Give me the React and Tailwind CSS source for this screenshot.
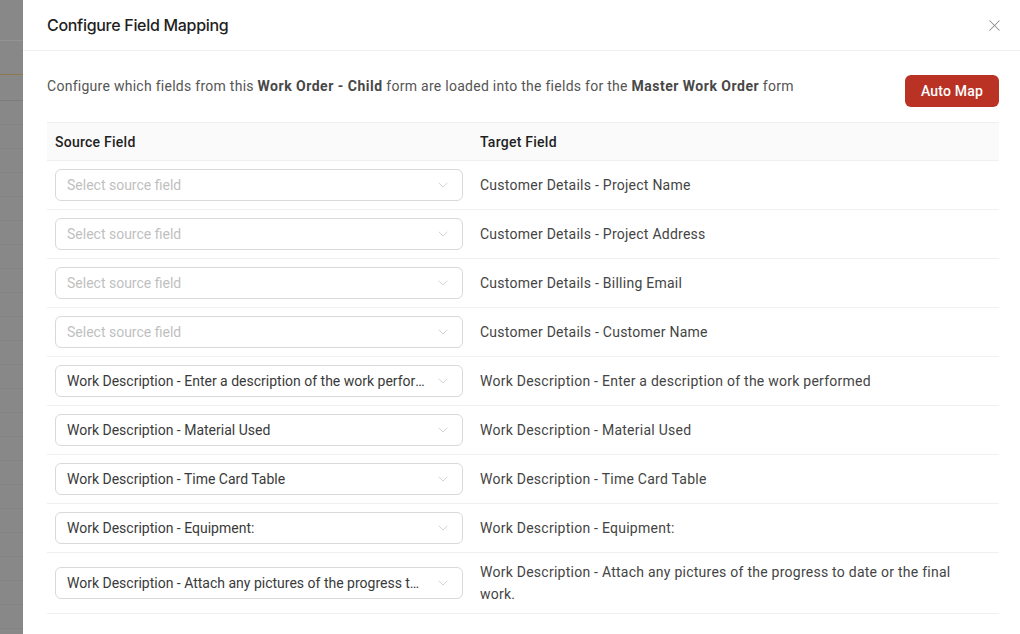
import { X, ChevronDown } from "lucide-react";

const rows = [
  { source: "", target: "Customer Details - Project Name" },
  { source: "", target: "Customer Details - Project Address" },
  { source: "", target: "Customer Details - Billing Email" },
  { source: "", target: "Customer Details - Customer Name" },
  {
    source: "Work Description - Enter a description of the work performed",
    target: "Work Description - Enter a description of the work performed",
  },
  { source: "Work Description - Material Used", target: "Work Description - Material Used" },
  { source: "Work Description - Time Card Table", target: "Work Description - Time Card Table" },
  { source: "Work Description - Equipment:", target: "Work Description - Equipment:" },
  {
    source: "Work Description - Attach any pictures of the progress to date or the final work.",
    target: "Work Description - Attach any pictures of the progress to date or the final work.",
  },
];

const SourceSelect = ({ value }) => (
  <div className="flex h-8 w-[408px] items-center rounded-md border border-[#d9d9d9] bg-white pl-[11px] pr-[11px]">
    <span
      className={`min-w-0 flex-1 truncate text-sm ${value ? "text-[#3a3a3a]" : "text-[#bfbfbf]"}`}
    >
      {value || "Select source field"}
    </span>
    <ChevronDown size={16} strokeWidth={1.1} className="ml-2 shrink-0 text-[#c4c4c4]" />
  </div>
);

const BackdropStrip = () => (
  <div className="flex w-[23px] shrink-0 flex-col bg-[#888888]">
    <div className="h-[41px] border-b border-[#939393]" />
    <div className="h-[34px] border-b border-[#8f7a4e]" />
    <div className="h-[26px] border-b border-[#7d7d7d]" />
    {Array.from({ length: 22 }).map((_, i) => (
      <div key={i} className="h-[24px] shrink-0 border-b border-[#838383]" />
    ))}
  </div>
);

export default function App() {
  return (
    <div
      className="flex h-[634px] w-[1020px] overflow-hidden bg-white"
      style={{ fontFamily: "Roboto, 'Noto Sans', 'Liberation Sans', sans-serif" }}
    >
      <BackdropStrip />
      <div className="flex flex-1 flex-col bg-white">
        <div className="flex h-[51px] shrink-0 items-center justify-between border-b border-[#f0f0f0] pl-6 pr-[16px]">
          <h2 className="font-['Inter',sans-serif] text-base font-medium tracking-[-0.3px] text-[#1f1f1f]">
            Configure Field Mapping
          </h2>
          <X size={19} strokeWidth={1.3} className="text-[#8c8c8c]" />
        </div>

        <div className="flex flex-col pl-6 pr-[21px] pt-6">
          <div className="flex items-start justify-between">
            <p className="text-sm leading-[22px] tracking-[0.27px] text-[#555555]">
              Configure which fields from this{" "}
              <strong className="font-bold tracking-[0.5px] text-[#484848]">Work Order - Child</strong>{" "}
              form are loaded into the fields for the{" "}
              <strong className="font-bold tracking-[0.5px] text-[#484848]">Master Work Order</strong>{" "}
              form
            </p>
            <button className="h-8 w-[94px] rounded-md bg-[#b93224] text-sm font-medium tracking-[0.2px] text-white">
              Auto Map
            </button>
          </div>

          <div className="mt-[15px] flex flex-col">
            <div className="flex h-[39px] items-center border-y border-[#f0f0f0] bg-[#fafafa] text-sm font-medium tracking-[0.25px] text-[#1f1f1f]">
              <div className="w-[425px] px-2">Source Field</div>
              <div className="flex-1 px-2">Target Field</div>
            </div>
            {rows.map((row, i) => (
              <div key={i} className="flex items-center border-b border-[#f0f0f0] py-2">
                <div className="w-[425px] shrink-0 px-2">
                  <SourceSelect value={row.source} />
                </div>
                <div className="flex-1 pl-2 pr-11 text-sm leading-[22px] tracking-[0.25px] text-[#444444]">
                  {row.target}
                </div>
              </div>
            ))}
          </div>
        </div>
      </div>
    </div>
  );
}
